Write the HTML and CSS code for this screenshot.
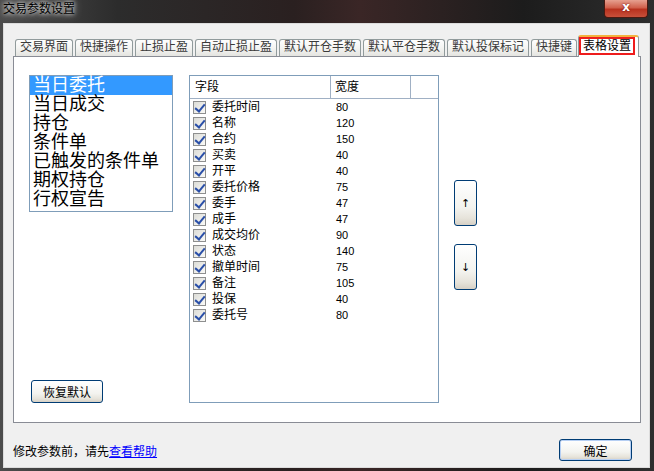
FILE: index.html
```html
<!DOCTYPE html>
<html lang="zh-CN">
<head>
    <meta charset="UTF-8">
    <meta name="viewport" content="width=device-width, initial-scale=1.0">
    <title>交易参数设置</title>
    <link rel="stylesheet" href="styles.css">
</head>
<body>
    <div class="window">
        <div class="titlebar">
            <span class="title">交易参数设置</span>
            <span class="close-btn">x</span>
        </div>

        <div class="client">
            <div class="tabs">
                <span class="tab w4">交易界面</span>
                <span class="tab w4">快捷操作</span>
                <span class="tab w4">止损止盈</span>
                <span class="tab w6">自动止损止盈</span>
                <span class="tab w6">默认开仓手数</span>
                <span class="tab w6">默认平仓手数</span>
                <span class="tab w6">默认投保标记</span>
                <span class="tab w3">快捷键</span>
                <span class="tab active"><span class="mark">表格设置</span></span>
            </div>

            <div class="panel">
                <div class="left-col">
                    <ul class="listbox">
                        <li class="selected">当日委托</li>
                        <li>当日成交</li>
                        <li>持仓</li>
                        <li>条件单</li>
                        <li>已触发的条件单</li>
                        <li>期权持仓</li>
                        <li>行权宣告</li>
                    </ul>
                    <button class="btn restore">恢复默认</button>
                </div>

                <div class="grid">
                    <div class="grid-head">
                        <span class="col-name">字段</span>
                        <span class="col-width">宽度</span>
                        <span class="col-rest"></span>
                    </div>
                    <div class="grid-row"><span class="check"></span><span class="name">委托时间</span><span class="val">80</span></div>
                    <div class="grid-row"><span class="check"></span><span class="name">名称</span><span class="val">120</span></div>
                    <div class="grid-row"><span class="check"></span><span class="name">合约</span><span class="val">150</span></div>
                    <div class="grid-row"><span class="check"></span><span class="name">买卖</span><span class="val">40</span></div>
                    <div class="grid-row"><span class="check"></span><span class="name">开平</span><span class="val">40</span></div>
                    <div class="grid-row"><span class="check"></span><span class="name">委托价格</span><span class="val">75</span></div>
                    <div class="grid-row"><span class="check"></span><span class="name">委手</span><span class="val">47</span></div>
                    <div class="grid-row"><span class="check"></span><span class="name">成手</span><span class="val">47</span></div>
                    <div class="grid-row"><span class="check"></span><span class="name">成交均价</span><span class="val">90</span></div>
                    <div class="grid-row"><span class="check"></span><span class="name">状态</span><span class="val">140</span></div>
                    <div class="grid-row"><span class="check"></span><span class="name">撤单时间</span><span class="val">75</span></div>
                    <div class="grid-row"><span class="check"></span><span class="name">备注</span><span class="val">105</span></div>
                    <div class="grid-row"><span class="check"></span><span class="name">投保</span><span class="val">40</span></div>
                    <div class="grid-row"><span class="check"></span><span class="name">委托号</span><span class="val">80</span></div>
                </div>

                <div class="move-col">
                    <button class="btn move">&#8593;</button>
                    <button class="btn move">&#8595;</button>
                </div>
            </div>

            <div class="footer">
                <span class="hint">修改参数前，请先<a href="#">查看帮助</a></span>
                <button class="btn ok">确定</button>
            </div>
        </div>
    </div>
</body>
</html>
```

FILE: styles.css
```css
* {
    margin: 0;
    padding: 0;
    box-sizing: border-box;
    font-family: "Liberation Sans", "Noto Sans CJK SC", sans-serif;
}

body {
    width: 654px;
    height: 471px;
    overflow: hidden;
    background: #1c1c1c;
}

.window {
    width: 654px;
    height: 471px;
    display: flex;
    flex-direction: column;
    padding: 0 4px 3px 3px;
    background: linear-gradient(90deg, #4c4c4c 0%, #2c2c2c 18%, #2a2020 45%, #3a2626 55%, #1c1c1c 80%, #2e2e2e 100%);
}

/* title bar */
.titlebar {
    height: 23px;
    display: flex;
    justify-content: space-between;
    align-items: flex-start;
}

.title {
    font-size: 12px;
    line-height: 18px;
    color: #000;
    text-shadow: 0 0 4px #fff, 0 0 8px rgba(255, 255, 255, 0.8);
}

.close-btn {
    width: 44px;
    height: 18px;
    margin-right: 2px;
    border: 1px solid #4a1a12;
    border-top: none;
    border-radius: 0 0 4px 4px;
    background: linear-gradient(#e6a090 0%, #d0604c 45%, #b8321f 55%, #c8503a 100%);
    color: #fff;
    font-family: "DejaVu Sans", sans-serif;
    font-weight: bold;
    font-size: 12px;
    line-height: 15px;
    text-align: center;
    text-shadow: 0 0 2px #600;
}

/* client area */
.client {
    flex: 1;
    display: flex;
    flex-direction: column;
    background: #f0f0f0;
    border: 1px solid #dcdcdc;
    padding: 11px 8px 0 9px;
}

.tabs {
    height: 21px;
    display: flex;
    align-items: flex-end;
    padding-left: 2px;
    position: relative;
    z-index: 1;
}

.tab {
    height: 17px;
    margin-right: 2px;
    border: 1px solid #919b9c;
    border-bottom: none;
    border-radius: 3px 3px 0 0;
    background: linear-gradient(#fefefe, #f4f4f2 50%, #e4e4e0);
    color: #3a3a3a;
    font-size: 12px;
    line-height: 15px;
    text-align: center;
}

.tab.w4 { width: 58px; }
.tab.w6 { width: 82px; }
.tab.w3 { width: 46px; }

.tab.active {
    width: 61px;
    height: 22px;
    margin-left: -1px;
    margin-bottom: -1px;
    background: #fff;
    border-top: 2px solid #f3b23e;
    text-align: left;
}

.mark {
    display: inline-block;
    width: 56px;
    height: 18px;
    border: 2px solid #ee1d1d;
    color: #000;
    font-size: 12px;
    line-height: 14px;
    text-align: center;
}

.panel {
    height: 367px;
    display: flex;
    background: #fff;
    border: 1px solid #898c95;
    padding: 18px 0 0 15px;
}

/* left list */
.left-col {
    width: 144px;
    height: 328px;
    display: flex;
    flex-direction: column;
    justify-content: space-between;
}

.listbox {
    list-style: none;
    height: 137px;
    border: 1px solid #7f9db9;
    background: #fff;
}

.listbox li {
    font-size: 18px;
    line-height: 19px;
    height: 19px;
    padding-left: 3px;
    color: #000;
}

.listbox li.selected {
    background: #3399ff;
    color: #fff;
}

.btn {
    border: 1px solid #003c74;
    border-radius: 3px;
    background: linear-gradient(#ffffff, #f3f3ef 60%, #e6e3da 85%, #d6d0c5);
    color: #000;
    font-size: 12px;
    cursor: pointer;
}

.restore {
    width: 72px;
    height: 23px;
    margin-left: 2px;
}

/* column grid */
.grid {
    width: 250px;
    height: 328px;
    margin-left: 16px;
    border: 1px solid #7f9db9;
    background: #fff;
}

.grid-head {
    height: 23px;
    display: flex;
    border-bottom: 1px solid #a0b0c4;
    font-size: 12px;
    line-height: 22px;
}

.col-name {
    width: 141px;
    padding-left: 5px;
    border-right: 1px solid #a0b0c4;
}

.col-width {
    width: 80px;
    padding-left: 4px;
    border-right: 1px solid #a0b0c4;
}

.col-rest {
    flex: 1;
}

.grid-row {
    height: 16px;
    display: flex;
    align-items: center;
    font-size: 12px;
}

.check {
    position: relative;
    width: 13px;
    height: 13px;
    margin-left: 3px;
    border: 1px solid #8e8f8f;
    background: linear-gradient(135deg, #dcdcd7, #fafaf8);
}

.check::after {
    content: "";
    position: absolute;
    left: 3px;
    top: 0;
    width: 4px;
    height: 8px;
    border-right: 2px solid #2a4fa8;
    border-bottom: 2px solid #2a4fa8;
    transform: rotate(40deg);
}

.name {
    width: 124px;
    margin-left: 6px;
    line-height: 16px;
}

.val {
    font-size: 11px;
    line-height: 16px;
}

/* move buttons */
.move-col {
    display: flex;
    flex-direction: column;
    gap: 18px;
    margin-left: 15px;
    padding-top: 105px;
}

.move {
    width: 23px;
    height: 46px;
    font-family: "DejaVu Sans", sans-serif;
    font-size: 11px;
}

/* footer */
.footer {
    height: 44px;
    display: flex;
    justify-content: space-between;
    align-items: center;
    padding: 10px 9px 0 0;
}

.hint {
    font-size: 12px;
    color: #000;
}

.hint a {
    color: #0000ff;
    text-decoration: underline;
}

.ok {
    width: 73px;
    height: 22px;
    box-shadow: inset 0 0 0 1px #b6cff3;
}
```
